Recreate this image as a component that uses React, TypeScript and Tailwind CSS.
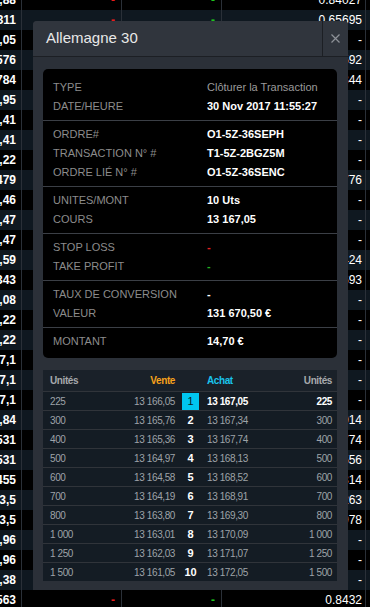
const leftVals = [
  "1,88", "1311", "3,05", "1576", "1784", "2,95", "2,41", "2,41", "1,22", "1479",
  "3,46", "1,47", "1,47", "5,59", "1343", "2,08", "1,22", "1,22", "27,1", "27,1",
  "27,1", "1,84", "1531", "1531", "1455", "33,5", "33,5", "1,96", "1,96", "1,38", "1563",
];

const rightVals = [
  "0.84027", "0.65695", "-", "0.91592", "0.87344", "-", "-", "-", "-", "0.71776",
  "-", "-", "-", "0.84424", "0.89693", "-", "-", "-", "-", "-",
  "-", "1.10014", "0.98774", "1.11556", "0.90314", "1.16263", "0.85978", "-", "-", "-", "0.8432",
];

const sections = [
  [
    ["TYPE", "Clôturer la Transaction", "muted"],
    ["DATE/HEURE", "30 Nov 2017 11:55:27", "bold"],
  ],
  [
    ["ORDRE#", "O1-5Z-36SEPH", "bold"],
    ["TRANSACTION N° #", "T1-5Z-2BGZ5M", "bold"],
    ["ORDRE LIÉ N° #", "O1-5Z-36SENC", "bold"],
  ],
  [
    ["UNITES/MONT", "10 Uts", "bold"],
    ["COURS", "13 167,05", "bold"],
  ],
  [
    ["STOP LOSS", "-", "red"],
    ["TAKE PROFIT", "-", "green"],
  ],
  [
    ["TAUX DE CONVERSION", "-", "bold"],
    ["VALEUR", "131 670,50 €", "bold"],
  ],
  [["MONTANT", "14,70 €", "bold"]],
];

const book = [
  ["225", "13 166,05", "1", "13 167,05", "225"],
  ["300", "13 165,76", "2", "13 167,34", "300"],
  ["400", "13 165,36", "3", "13 167,74", "400"],
  ["500", "13 164,97", "4", "13 168,13", "500"],
  ["600", "13 164,58", "5", "13 168,52", "600"],
  ["700", "13 164,19", "6", "13 168,91", "700"],
  ["800", "13 163,80", "7", "13 169,30", "800"],
  ["1 000", "13 163,01", "8", "13 170,09", "1 000"],
  ["1 250", "13 162,03", "9", "13 171,07", "1 250"],
  ["1 500", "13 161,05", "10", "13 172,05", "1 500"],
];

const valueClass = (kind: string) => {
  if (kind === "muted") return "text-[#9a9a9a]";
  if (kind === "red") return "text-[#e32222] font-bold";
  if (kind === "green") return "text-[#22b022] font-bold";
  return "text-white font-bold";
};

export default function App() {
  return (
    <div className="relative w-[370px] h-[607px] overflow-hidden bg-black font-['Liberation_Sans',Arial,sans-serif]">
      {/* background quote table */}
      <div className="-mt-[10px] flex flex-col">
        {leftVals.map((l, i) => (
          <div
            key={i}
            className={i % 2 ? "flex h-[20px] bg-[#0f1820]" : "flex h-[20px] bg-black"}
          >
            <div className="w-[22px] shrink-0 flex justify-end items-center pr-[5px] border-r border-[#2a3038] text-white font-bold text-[12px] whitespace-nowrap">
              {l}
            </div>
            <div className="w-[100px] shrink-0 flex justify-end items-center pr-[6px] border-r border-[#2a3038] text-[#e81c1c] font-bold text-[12px]">
              -
            </div>
            <div className="w-[100px] shrink-0 flex justify-end items-center pr-[6px] border-r border-[#2a3038] text-[#1ec31e] font-bold text-[12px]">
              -
            </div>
            <div className="w-[144px] shrink-0 flex justify-end items-center pr-[3px] border-r border-[#2a3038] text-white text-[12px] whitespace-nowrap">
              {rightVals[i]}
            </div>
            <div className="flex-1" />
          </div>
        ))}
      </div>

      {/* modal */}
      <div className="absolute left-[33px] top-[21px] w-[315px] h-[569px] bg-[#2b3038] rounded-t-[4px] flex flex-col">
        <div className="h-[36px] flex items-center border-b border-[#1c1f24] bg-[#30353d] rounded-t-[4px]">
          <div className="flex-1 pl-[13px] text-[15px] text-[#e8e8e8]">Allemagne 30</div>
          <div className="w-[26px] h-full flex items-center justify-center border-l border-[#1c1f24]">
            <svg width="9" height="9" viewBox="0 0 9 9">
              <path d="M0.5 0.5 L8.5 8.5 M8.5 0.5 L0.5 8.5" stroke="#8d9198" strokeWidth="1.2" />
            </svg>
          </div>
        </div>

        <div className="px-[10px] pt-[12px]">
          <div className="w-[294px] bg-black rounded-[5px] pt-[5px] pb-[3px] text-[11px]">
            {sections.map((sec, si) => (
              <div key={si} className={si ? "border-t border-[#3b3f46] py-[4px]" : "py-[4px]"}>
                {sec.map(([label, value, kind]) => (
                  <div key={label} className="h-[19px] flex items-center pl-[10px]">
                    <div className="w-[154px] text-[#8c8c8c]">{label}</div>
                    <div className={valueClass(kind)}>{value}</div>
                  </div>
                ))}
              </div>
            ))}
          </div>

          <div className="mt-[12px] w-[294px] bg-[#141c24] text-[10px] tracking-[-0.4px]">
            <div className="h-[21px] flex items-center pl-[7px] pr-[5px] bg-[#1a2129] font-bold">
              <div className="w-[60px] text-[#a7a9ac]">Unités</div>
              <div className="w-[65px] text-right text-[#f7a21b]">Vente</div>
              <div className="w-[17px] ml-[7px]" />
              <div className="ml-[8px] flex-1 text-[#19c3ec]">Achat</div>
              <div className="text-right text-[#a7a9ac]">Unités</div>
            </div>
            {book.map((r, i) => (
              <div key={i} className="h-[19px] flex items-center pl-[7px] pr-[5px] border-t border-[#30343a] text-[#9ea3a8]">
                <div className="w-[60px]">{r[0]}</div>
                <div className="w-[65px] text-right">{r[1]}</div>
                <div
                  className={
                    i === 0
                      ? "w-[17px] h-[17px] ml-[7px] flex items-center justify-center bg-[#00c6ef] text-[#0b1a26] text-[11px] tracking-normal"
                      : "w-[17px] h-[17px] ml-[7px] flex items-center justify-center text-white font-bold text-[11px] tracking-normal"
                  }
                >
                  {r[2]}
                </div>
                <div className={i === 0 ? "ml-[8px] flex-1 text-white font-bold" : "ml-[8px] flex-1"}>{r[3]}</div>
                <div className={i === 0 ? "text-right text-white font-bold" : "text-right"}>{r[4]}</div>
              </div>
            ))}
          </div>
        </div>
      </div>
    </div>
  );
}
